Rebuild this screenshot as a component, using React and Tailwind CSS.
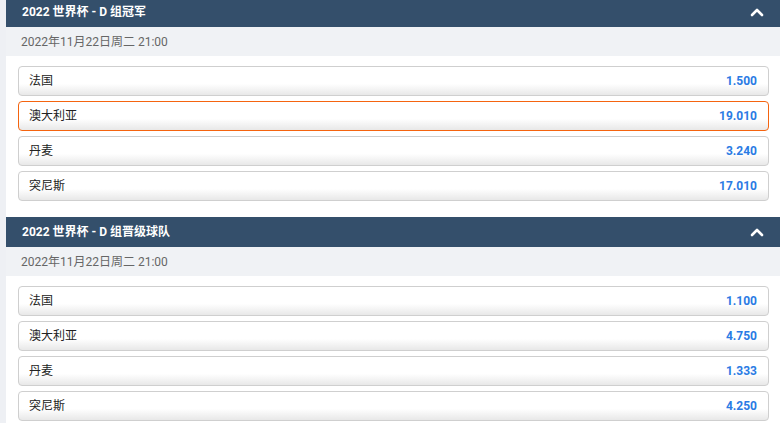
import React from 'react';

const markets = [
  {
    title: '2022 世界杯 - D 组冠军',
    date: '2022年11月22日周二 21:00',
    options: [
      { name: '法国', odds: '1.500' },
      { name: '澳大利亚', odds: '19.010', selected: true },
      { name: '丹麦', odds: '3.240' },
      { name: '突尼斯', odds: '17.010' },
    ],
  },
  {
    title: '2022 世界杯 - D 组晋级球队',
    date: '2022年11月22日周二 21:00',
    options: [
      { name: '法国', odds: '1.100' },
      { name: '澳大利亚', odds: '4.750' },
      { name: '丹麦', odds: '1.333' },
      { name: '突尼斯', odds: '4.250' },
    ],
  },
];

const ChevronUp = () => (
  <svg width="14" height="10" viewBox="0 0 14 10" fill="none">
    <path d="M2 8 L7 3 L12 8" stroke="white" strokeWidth="2.6" strokeLinecap="round" strokeLinejoin="round" />
  </svg>
);

const OddsButton = ({ name, odds, selected }) => (
  <div
    className={`flex h-[30px] items-center justify-between rounded-[4px] border bg-gradient-to-b from-white from-60% to-[#e8e8e8] pl-[10px] pr-[11px] ${
      selected ? 'border-[#f5640f]' : 'border-[#cfcfcf]'
    }`}
  >
    <span className="text-[12px] text-[#222]">{name}</span>
    <span className="text-[12px] font-bold text-[#2a7be4]">{odds}</span>
  </div>
);

const Market = ({ market }) => (
  <section>
    <div className="flex h-[30px] items-center justify-between bg-[#344f6b] pl-[16px] pr-[16px]">
      <span className="text-[12px] font-bold text-white">{market.title}</span>
      <ChevronUp />
    </div>
    <div className="flex h-[29px] items-center bg-[#f0f2f5] pl-[15px] text-[12px] text-[#666]">
      {market.date}
    </div>
    <div className="flex flex-col gap-[5px] bg-white pb-[16px] pl-[12px] pr-[11px] pt-[10px]">
      {market.options.map((o) => (
        <OddsButton key={o.name} {...o} />
      ))}
    </div>
  </section>
);

export default function App() {
  return (
    <div
      className="h-[423px] w-[780px] overflow-hidden bg-[#eef0f4] pl-[6px]"
      style={{ fontFamily: 'Roboto, "Noto Sans CJK SC", sans-serif' }}
    >
      <div className="-mt-[3px]">
        {markets.map((m) => (
          <Market key={m.title} market={m} />
        ))}
      </div>
    </div>
  );
}
